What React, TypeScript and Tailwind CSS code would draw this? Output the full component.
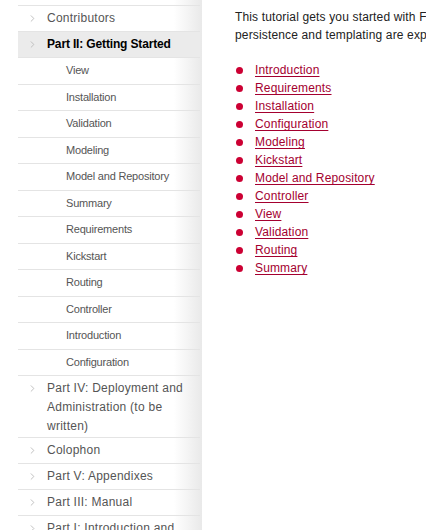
import { FiChevronRight } from "react-icons/fi";

const chapters = [
  "View",
  "Installation",
  "Validation",
  "Modeling",
  "Model and Repository",
  "Summary",
  "Requirements",
  "Kickstart",
  "Routing",
  "Controller",
  "Introduction",
  "Configuration",
];

const links = [
  "Introduction",
  "Requirements",
  "Installation",
  "Configuration",
  "Modeling",
  "Kickstart",
  "Model and Repository",
  "Controller",
  "View",
  "Validation",
  "Routing",
  "Summary",
];

const TopItem = ({ label, active, multi }: { label: string; active?: boolean; multi?: boolean }) => {
  return (
    <li
      className={
        "flex border-b border-[#e4e4e4] pr-2 text-[12px] leading-[19px] " +
        (multi ? "pt-[3px] pb-[1px] " : "py-[3px] ") +
        (active ? "bg-[#ebebeb] font-bold tracking-[-0.15px] text-black" : "tracking-[0.25px] text-[#555]")
      }
    >
      <span className="flex w-[29px] shrink-0 justify-center pt-[4px] text-[#bbb]">
        <FiChevronRight className="text-[11px]" />
      </span>
      <span>{label}</span>
    </li>
  );
};

export default function App() {
  return (
    <div
      className="flex h-[530px] w-[426px] overflow-hidden bg-white"
      style={{ fontFamily: '"Liberation Sans", Arial, sans-serif' }}
    >
      <aside className="w-[202px] shrink-0 bg-gradient-to-r from-white from-[86%] to-[#e9e9e9] pl-[18px] pr-[2px]">
        <ul className="mt-[5px] border-t border-[#e4e4e4]">
          <TopItem label="Contributors" />
          <TopItem label="Part II: Getting Started" active />
          {chapters.map((c) => (
            <li
              key={c}
              className="border-b border-[#e4e4e4] pl-[48px] text-[11px] leading-[25.5px] tracking-[-0.2px] text-[#555]"
            >
              {c}
            </li>
          ))}
          <TopItem label="Part IV: Deployment and Administration (to be written)" multi />
          <TopItem label="Colophon" />
          <TopItem label="Part V: Appendixes" />
          <TopItem label="Part III: Manual" />
          <TopItem label="Part I: Introduction and Fundamentals" />
        </ul>
      </aside>

      <main className="min-w-0 flex-1 pl-[33px] pt-[8px] text-[12px] leading-[18px] tracking-[0.15px] text-[#222]">
        <p className="whitespace-nowrap">
          This tutorial gets you started with Flow and explains the setup. MVC,
          <br />
          persistence and templating are explained along the way.
        </p>
        <ul className="mt-[17px]">
          {links.map((l) => (
            <li key={l} className="flex items-center">
              <span className="ml-[1px] mr-[12px] h-[7px] w-[7px] rounded-full bg-[#cc0033]" />
              <a href="#" className="text-[#a4002f] underline underline-offset-[2px]">
                {l}
              </a>
            </li>
          ))}
        </ul>
      </main>
    </div>
  );
}
